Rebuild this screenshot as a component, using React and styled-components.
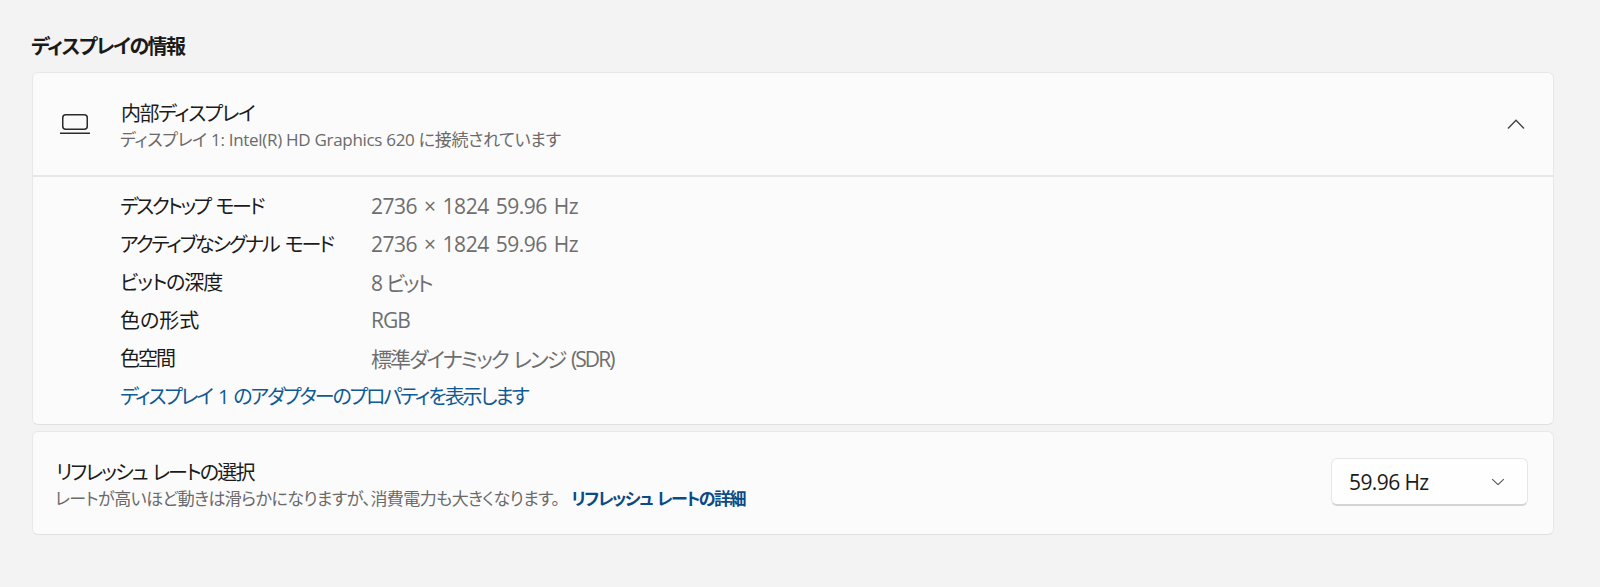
import React from 'react';
import styled, { createGlobalStyle } from 'styled-components';

const GlobalStyle = createGlobalStyle`
  html, body {
    margin: 0;
    padding: 0;
    background: #f3f3f3;
  }
  body {
    font-family: "Open Sans", "Noto Sans CJK JP", sans-serif;
    font-feature-settings: "palt";
    color: #1b1b1b;
  }
`;

const Page = styled.div`
  width: 1600px;
  height: 587px;
  box-sizing: border-box;
  padding: 33px 46px 0 32px;
  overflow: hidden;
`;

const SectionTitle = styled.h2`
  margin: 0 0 12px -1px;
  height: 27px;
  line-height: 27px;
  font-size: 20px;
  font-weight: 700;
  letter-spacing: -1.5px;
  color: #1a1a1a;
`;

const Card = styled.section`
  background: #fbfbfb;
  border: 1px solid #e8e8e8;
  border-bottom-color: #e0e0e0;
  border-radius: 6px;
  margin-bottom: 6px;
`;

const Header = styled.div`
  display: flex;
  align-items: center;
  height: 102px;
  padding: 0 28px 0 27px;
  border-bottom: 2px solid #e6e6e6;
`;

const IconSlot = styled.div`
  width: 61px;
  flex: none;
  display: flex;
  align-items: center;
`;

const HeaderText = styled.div`
  flex: 1;
  padding-top: 2px;
`;

const Title = styled.div`
  font-size: 20px;
  line-height: 28px;
  letter-spacing: ${(p) => p.$track}px;
  word-spacing: 2px;
  color: #1b1b1b;
`;

const Sub = styled.div`
  margin-left: -1px;
  font-size: 17px;
  line-height: 23px;
  letter-spacing: ${(p) => p.$track}px;
  color: #6a6a6a;
`;

const Details = styled.div`
  padding: 9px 0 8px 87px;
`;

const Row = styled.div`
  display: grid;
  grid-template-columns: 251px 1fr;
  align-items: center;
  height: 38px;
`;

const Label = styled.span`
  font-size: 20px;
  letter-spacing: ${(p) => p.$track}px;
  word-spacing: 3px;
  color: #1b1b1b;
`;

const Value = styled.span`
  padding-top: 2px;
  font-size: 21px;
  letter-spacing: ${(p) => p.$track}px;
  word-spacing: 2px;
  color: #6e6e6e;
`;

const AdapterLink = styled.a`
  display: block;
  margin-top: 2px;
  height: 38px;
  line-height: 38px;
  font-size: 20px;
  letter-spacing: -2.1px;
  word-spacing: 3px;
  color: #0f5a94;
`;

const RateRow = styled.div`
  box-sizing: border-box;
  display: flex;
  align-items: center;
  justify-content: space-between;
  height: 102px;
  padding: 0 25px 2px 24px;
`;

const RateText = styled.div`
  padding-top: 4px;
  margin-left: -1px;
`;

const RateLink = styled.a`
  margin-left: 12px;
  font-weight: 700;
  letter-spacing: -1.55px;
  word-spacing: 2px;
  color: #0a4a85;
`;

const Select = styled.div`
  box-sizing: border-box;
  width: 197px;
  height: 48px;
  display: flex;
  align-items: center;
  justify-content: space-between;
  padding: 0 22px 0 17px;
  background: #fefefe;
  border: 1px solid #e6e6e6;
  border-bottom: 2px solid #d4d4d4;
  border-radius: 6px;
  font-size: 21px;
  letter-spacing: -0.6px;
  color: #1b1b1b;
`;

const LaptopIcon = () => (
  <svg width="30" height="22" viewBox="0 0 30 22" fill="none" stroke="#2b2b2b" strokeWidth="1.5">
    <rect x="2.75" y="1.75" width="24.5" height="14.5" rx="3" />
    <path d="M0 20.25h30" />
  </svg>
);

const Chevron = ({ up, size = 18, color = '#444' }) => (
  <svg width={size} height={size * 0.56} viewBox="0 0 18 10" fill="none" stroke={color} strokeWidth="1.4">
    <path d={up ? 'M1 9.4 9 1.2l8 8.2' : 'M1.5 1.5 9 8.5l7.5-7'} />
  </svg>
);

const rows = [
  { label: 'デスクトップ モード', value: '2736 × 1824 59.96 Hz', labelTrack: -2.4, valueTrack: -0.48 },
  { label: 'アクティブなシグナル モード', value: '2736 × 1824 59.96 Hz', labelTrack: -2.1, valueTrack: -0.48 },
  { label: 'ビットの深度', value: '8 ビット', labelTrack: -1.1, valueTrack: -2.2 },
  { label: '色の形式', value: 'RGB', labelTrack: 0, valueTrack: -1 },
  { label: '色空間', value: '標準ダイナミック レンジ (SDR)', labelTrack: -2, valueTrack: -1.9 },
];

const App = () => (
  <Page>
    <GlobalStyle />
    <SectionTitle>ディスプレイの情報</SectionTitle>
    <Card>
      <Header>
        <IconSlot>
          <LaptopIcon />
        </IconSlot>
        <HeaderText>
          <Title $track={-1.4}>内部ディスプレイ</Title>
          <Sub $track={-0.3}>ディスプレイ 1: Intel(R) HD Graphics 620 に接続されています</Sub>
        </HeaderText>
        <Chevron up />
      </Header>
      <Details>
        {rows.map((row) => (
          <Row key={row.label}>
            <Label $track={row.labelTrack}>{row.label}</Label>
            <Value $track={row.valueTrack}>{row.value}</Value>
          </Row>
        ))}
        <AdapterLink>ディスプレイ 1 のアダプターのプロパティを表示します</AdapterLink>
      </Details>
    </Card>
    <Card>
      <RateRow>
        <RateText>
          <Title $track={-1.8}>リフレッシュ レートの選択</Title>
          <Sub $track={-0.57}>
            レートが高いほど動きは滑らかになりますが、消費電力も大きくなります。
            <RateLink>リフレッシュ レートの詳細</RateLink>
          </Sub>
        </RateText>
        <Select>
          59.96 Hz
          <Chevron size={14} color="#555" />
        </Select>
      </RateRow>
    </Card>
  </Page>
);

export default App;
